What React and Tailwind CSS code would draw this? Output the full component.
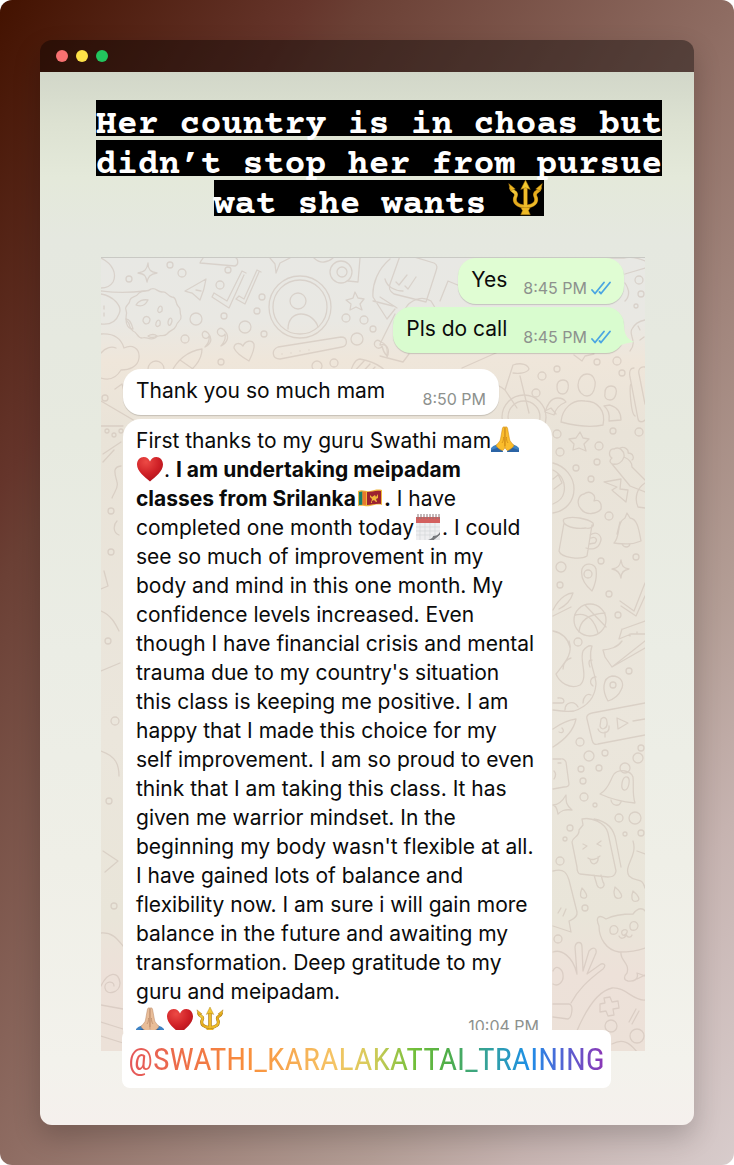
import React from "react";

function Trident({ className }) {
  return (
    <svg viewBox="0 0 30 30" className={className} role="img" aria-label="trident">
      <defs>
        <linearGradient id="gold" x1="0" y1="0" x2="1" y2="1">
          <stop offset="0" stopColor="#f8d84a" />
          <stop offset=".5" stopColor="#e3a91b" />
          <stop offset="1" stopColor="#f3c52f" />
        </linearGradient>
      </defs>
      <g fill="none" stroke="#9a6a0c" strokeLinecap="round">
        <path d="M15 6v18" strokeWidth="3.600" />
        <path d="M3 7c1 4 5 2 4 6-3 6 2 9 8 9s11-3 8-9c-1-4 3-2 4-6" strokeWidth="3.200" />
      </g>
      <path d="M3 7c1 4 5 2 4 6-3 6 2 9 8 9s11-3 8-9c-1-4 3-2 4-6" fill="none" stroke="url(#gold)" strokeWidth="2.400" strokeLinecap="round" />
      <path d="M13.700 6h2.600v20h-2.600z" fill="#efbd2b" />
      <path d="M15 0l4 8-4-1.500L11 8z" fill="#f5c92f" stroke="#9a6a0c" strokeWidth=".4" />
      <path d="M1 3l5.500 4.500L2.500 9z M29 3l-5.500 4.500L27.500 9z" fill="#edb722" stroke="#9a6a0c" strokeWidth=".4" />
      <path d="M11 23h8l-1.500 2.500L19 29h-8l1.500-3.500z" fill="#eeb925" stroke="#9a6a0c" strokeWidth=".4" />
    </svg>
  );
}

function Heart({ className }) {
  return (
    <svg viewBox="0 0 28 28" className={className} role="img" aria-label="red heart">
      <defs>
        <radialGradient id="heart" cx=".35" cy=".2" r=".9">
          <stop offset="0" stopColor="#ec4a45" />
          <stop offset=".55" stopColor="#cf2026" />
          <stop offset="1" stopColor="#a90f18" />
        </radialGradient>
      </defs>
      <path d="M14 26.500C9 22 1 16.500 1 9.500 1 5 4 2 7.700 2c3 0 5.300 1.800 6.300 4.500C15 3.800 17.300 2 20.300 2 24 2 27 5 27 9.500c0 7-8 12.500-13 17z" fill="url(#heart)" />
    </svg>
  );
}

function Hands({ className, light }) {
  const skin = light ? "#e9bd98" : "#fbbd2c";
  const shade = light ? "#b98664" : "#c9820f";
  return (
    <svg viewBox="0 0 28 28" className={className} role="img" aria-label="folded hands">
      <path d="M0 22c3-3 6-4 9-4l3 8H0zM28 22c-3-3-6-4-9-4l-3 8h12z" fill="#3f83c4" />
      <path d="M0 24l9-3 3 5H0zM28 24l-9-3-3 5h12z" fill="#2b64a5" />
      <path d="M13.800 1c-1.500-.6-2.300.4-2.500 2L9.500 13C9 15.500 7.500 16.500 5 19.500c1 2 4 4.500 6.500 5 2.500-1.500 2.500-3 2.500-6z" fill={skin} stroke={shade} strokeWidth=".5" />
      <path d="M14.200 1c1.500-.6 2.300.4 2.500 2l1.800 10c.5 2.500 2 3.500 4.500 6.500-1 2-4 4.500-6.500 5-2.500-1.500-2.500-3-2.500-6z" fill={skin} stroke={shade} strokeWidth=".5" />
      <path d="M14 2v18M11 17c1.500-2 1.500-4 1.500-6M17 17c-1.500-2-1.500-4-1.500-6" fill="none" stroke={shade} strokeWidth=".7" />
    </svg>
  );
}

function Flag({ className }) {
  return (
    <svg viewBox="0 0 28 20" className={className} role="img" aria-label="flag of Sri Lanka">
      <path d="M2 3c5-2 8 1 12 0s8-2 12-1v15c-4-1-8 0-12 1s-7-1-12 0z" fill="#f0b63c" />
      <path d="M3 4l3.500-.6v13.400l-3.500.3z" fill="#16806c" />
      <path d="M6.500 3.500l3.500.3v13.300l-3.500-.4z" fill="#e9792b" />
      <path d="M11 4c5 0 9-2 14-1v13c-5-.7-9 1-14 1z" fill="#9c2230" />
      <path d="M14 7l2 2 3-2 1 2 2-3v4l-2 1 1 3h-1l-2-2-2 1v2h-1l1-4-2-2z" fill="#f0b63c" />
    </svg>
  );
}

function Calendar({ className }) {
  return (
    <svg viewBox="0 0 26 28" className={className} role="img" aria-label="calendar">
      <path d="M1 4h24v16l-8 7H1z" fill="#eeeef0" />
      <path d="M1 4h24v6H1z" fill="#d3605f" />
      <path d="M3 1v5M6 1v5M9 1v5M12 1v5M15 1v5M18 1v5M21 1v5M24 1v5" stroke="#8a7476" strokeWidth="1" />
      <path d="M5 10v17M10 10v17M15 10v16M20 10v13M1 14h24M1 18h24M1 22h20" stroke="#d3d5d9" strokeWidth=".7" />
      <path d="M13 27c4-1 5-3 5-4 3 0 5-1 7-4v3l-6 5z" fill="#76787c" />
      <path d="M19 27l6-5v5z" fill="#e6e6e8" />
    </svg>
  );
}

function ReadTicks() {
  return (
    <svg viewBox="0 0 20 14" className="h-3.5 w-5 shrink-0" role="img" aria-label="Read" fill="none" stroke="#4ba6e2" strokeWidth="1.800" strokeLinecap="round" strokeLinejoin="round">
      <path d="M1 9l3 3.500L13 1.500M8.500 11l1.500 1.500L19 1.500" />
    </svg>
  );
}

const DOTS = [
  [170, 264, 3], [182, 272, 4], [129, 278, 3], [196, 318, 6], [245, 326, 6], [228, 269, 3], [220, 284, 4],
  [262, 296, 3], [257, 310, 3], [224, 315, 3], [264, 333, 3], [185, 338, 4], [346, 317, 4], [364, 319, 4],
  [357, 338, 6], [373, 328, 3], [156, 368, 8], [317, 365, 5], [334, 362, 4], [221, 361, 3], [105, 397, 3],
  [639, 279, 4], [641, 293, 3], [636, 305, 2], [542, 375, 4], [557, 368, 3], [536, 392, 4], [597, 361, 3],
  [617, 360, 4], [622, 372, 3], [639, 431, 4], [557, 433, 4], [599, 445, 4], [613, 430, 3], [560, 451, 4],
  [597, 461, 3], [576, 467, 3], [591, 478, 3], [609, 515, 4], [561, 566, 5], [601, 560, 3], [636, 556, 3],
  [560, 584, 3], [609, 593, 3], [618, 614, 3], [578, 641, 4], [629, 670, 3], [580, 741, 4], [589, 755, 5],
  [605, 752, 3], [638, 757, 5], [641, 747, 3], [581, 768, 3], [599, 767, 3], [583, 780, 3], [584, 796, 4],
  [595, 804, 2], [619, 817, 4], [635, 817, 6], [625, 833, 2], [641, 832, 3], [570, 827, 3], [565, 838, 2],
  [560, 860, 4], [585, 907, 3], [558, 938, 4], [107, 430, 2], [114, 434, 2], [121, 430, 2], [111, 510, 3],
  [111, 551, 3], [108, 640, 3], [115, 720, 4], [109, 800, 3], [114, 905, 3], [611, 1025, 6], [637, 1035, 7],
];

function Doodles() {
  return (
    <svg
      viewBox="101 257 544 794"
      preserveAspectRatio="xMaxYMin slice"
      className="absolute inset-0 h-full w-full opacity-45"
      aria-hidden="true"
      fill="none"
      stroke="#c6b7ad"
      strokeWidth="1.300"
      strokeLinecap="round"
      strokeLinejoin="round"
    >
      {DOTS.map(([x, y, r]) => (
        <circle key={`${x}-${y}`} cx={x} cy={y} r={r} />
      ))}
      <path d="M101 257c12 6 16 16 12 24-3 5-8 6-12 6M101 290c8 1 20 3 44 0M101 293c12 2 22 12 18 20-3 8-10 11-18 10M104 305v3M104 312v3M101 333c13-1 20 4 23 14 8-4 16 0 15 10-1 9-10 12-18 12-6 10-14 10-20 8M101 352c4-5 10-7 15-5" />
      <path d="M148 262c0 6 2 9 9 10-7 1-9 4-10 9-1-6-2-8-9-9 7-1 9-4 10-10z" />
      <path d="M151 288c5-2 6 3 11 3 5-1 5 4 10 5 5 0 3 6 6 9 4 3 1 6 3 10 1 5-4 5-5 10-2 5-5 3-9 8-4 4-8-1-12 4-6 3-8-2-13 0-5 0-4-5-9-7-5-3-2-7-6-10-3-4 1-6-1-11-2-5 4-5 4-10 1-4 6-2 9-7 4-4 8 0 12-4z" />
      <path d="M136 304c2-4 7-6 12-5-3 6-7 7-12 5zM158 308c2-5 5-3 4 2-3 3-5 1-4-2zM143 320c0-5 5-6 7-2 0 5-5 7-7 2zM156 322c2-5 5-3 4 2-3 3-5 1-4-2zM126 318c4 0 6 6 7 10-5 0-7-5-7-10zM148 335c3-2 7-2 9 0-3 2-7 2-9 0zM168 321c1-5 4-5 4-1-1 5-4 6-4 1z" />
      <path d="M185 290l21-12c-1 7-3 14-6 21l-8-7zM192 292l8 7M196 289l5 1" />
      <path d="M212 296l17 11 15-33M214 292l13 8 15-30 4 2M236 298l9 5 14-32M239 295l5 3 13-29 4 2M212 296l2-4M236 298l3-3" />
      <circle cx="300" cy="306" r="31" />
      <circle cx="300" cy="306" r="27" />
      <circle cx="298" cy="300" r="8" />
      <path d="M288 328c0-10 6-15 13-15 8 0 15 6 17 13M355 291l3 6 6 1-4 5 2 6-6-3-6 3 1-6-5-4 7-2z" />
      <path d="M208 332c-4-4-7 0-5 4 2 2 5 2 6-1 1 5-1 8-4 11 6-3 8-8 3-14zM224 329c-4-4-8 0-6 4 2 3 6 3 7 0 1 5-1 8-4 12 7-4 9-10 3-16zM381 341c-4-4-8 0-6 4 2 3 6 3 7 0 1 5 3 8 5 10 1-7 0-12-6-14z" />
      <path d="M249 360c-7-4-13-8-15-13 0-5 6-6 9-2 2-5 9-7 11-2 1 5-2 11-5 17z" />
      <path d="M278 346l63-10c7 0 7 9 1 10l-62 12c-8 0-9-9-2-12zM282 353v0M291 352v0M300 350v0M309 349v0M200 262l35 3c4-1 3-7 1-8M200 262c1-3 3-4 3-5" />
      <path d="M172 370c5-10 15-20 30-22 0 12-10 22-20 27M180 359l13 9M101 400l34 20h18M115 388l7-5 2 7M348 380c3-12 6-22 12-22 15 3 28 10 30 22M350 375l14-15M356 378l14-15M362 380l13-14" />
      <circle cx="341" cy="271" r="11" />
      <circle cx="342" cy="271" r="5" />
      <path d="M314 257c6 6 14 5 20-1M348 280l10 1 2-24M270 257l5 6 1 9 4-10 10-5M390 258c-12 10-18 25-17 38l14 22M387 318l8-10M373 300l20 5M385 278c2 8 10 12 18 12" />
      <path d="M401 252l33 10c4 2 3 5 2 8l-10 31-32-8c-5-3-5-6-4-10zM396 281l3 3 8-10M405 285l3 3 8-12M380 296l17 11M405 308c5-9 17-14 26-8l11 18M380 355l23 6 6-8M395 313l-15 30M440 300l8-20 12 5M380 344c8-2 10 6 7 12" />
      <path d="M462 367l45-20M480 377c7 3 16 5 25 12l8-25c9-3 15 0 16 4-2 4-10 5-16 4M505 389l12 18M520 375l9 37" />
      <circle cx="524" cy="416" r="22" />
      <circle cx="524" cy="416" r="16" />
      <path d="M587 373c6 0 9 6 8 12-1 6-4 10-8 10s-9-4-9-11c0-6 4-11 9-11zM563 379c5 0 6 4 5 9-1 3-3 5-5 5-4 0-6-3-6-7s2-7 6-7zM611 385c5 0 6 4 5 8-1 4-3 6-6 6-4 0-6-3-5-7 0-4 2-7 6-7zM561 421c1-13 11-23 24-21 13 0 21 10 18 24-13 3-27 1-42-3zM558 397c-8 0-11 8-13 14l9 3c2-8 7-11 12-13-2-3-5-4-8-4zM610 404c7 2 11 7 11 15l-12 1c1-7-1-12-5-15z" />
      <path d="M634 367c-4 0-5 4-4 9l8 42c1 4 5 3 7 1M645 366c-5-1-7 3-6 7l6 30M635 415c-4-1-6-30-4-32M604 257h20c8-2 14 0 21 3M625 273l20-6M625 300c5-5 4-12 0-18M630 350c8-10-2-16 2-22 3-6 8-8 13-9M638 325l2 4M640 339l4-3M574 354l8 6 3-5 9-2M545 410l6-3 5 6M508 302l6-4" />
      <path d="M580 431l3 6 6 1-5 5 2 7-7-3-6 2 1-6-5-5 7-1zM614 448c5-3 11 2 10 8 5 2 8 5 8 10l13 13M624 456c-2 6-7 8-12 7l18 22 15 6M614 448c-5-1-6 7-2 9-4 3-1 7 3 6M620 447c5-2 9 2 8 5 6 0 6 6 4 7" />
      <path d="M604 481l17-3-1 10 8 1-2 12-12-10-2-2 5-3z" />
      <path d="M584 493c5-4 13 0 10 7 5-2 8 2 7 8-4 5-15 7-20 0-5-5-3-14 3-15zM553 462c12 3 21 14 21 26s-8 22-21 24M553 469c8 4 13 12 11 22-1 6-6 10-11 12M554 488l8-6-4-9M553 478l5-4M645 482c-8 5-11 15-7 24l7 1" />
      <path d="M564 518c8-4 24 0 29 4 2 4-4 6-7 5-8 1-18 0-22-5-1-2-1-3 0-4zM564 522l-5 28c2 7 22 9 28 5l5-31M590 534c8-5 13 2 10 8-2 6-9 7-14 5M591 537c5-2 7 2 4 5l-6 1" />
      <path d="M614 542c7-7 2-20 11-25l2-5 3 5c8 1 9 13 11 23-9 4-18 3-27 2zM622 543c2 4 7 4 8 0M620 521l-3 12M621 559c1 6 2 8 8 9-6 1-8 4-8 9-1-5-3-8-9-9 6-1 8-3 9-9z" />
      <path d="M592 590c-7-6-12-13-10-22 3-7 12-6 14 0 1 7-1 16-4 22zM553 609c7-14 16-17 20-17-2 7-8 13-14 16M553 615l18-9M620 600l14 10 11-28M621 605l15 10 9-20M622 628l-3 10 12-5h14M623 628l22-8M630 633v2M637 631v2" />
      <circle cx="588" cy="573" r="4" />
      <circle cx="590" cy="619" r="16" />
      <path d="M575 614c12-3 19 4 23 18M579 631c1-12 9-18 26-19M585 604l21 22M553 630c10 2 15 8 17 16" />
      <path d="M569 640c4 12-2 19-13 33 3 8 14 16 24 11 9-8-1-25 3-34 3-4 6-6 9-5-5 14 4 28 4 38-1 14-10 23-22 27-7 1-14 0-21-1M553 702h9c3 0 3-6-4-5M563 668c0-6 4-10 8-11M592 659c-3-1-4 3-2 7M596 676c-6 0-7 6-3 9M583 702c0-6 4-10 8-8M565 709c0-8 9-10 13-3" />
      <path d="M603 649c7-1 14-2 19-9M603 649l2 7 7 10 33-19M612 666l33-26" />
      <path d="M608 700c-6-10-6-23 4-25 9 0 13 7 9 14-2 5-7 9-13 11z" />
      <circle cx="613" cy="684" r="3" />
      <path d="M645 702l-53 10c-4 1-6 3-5 6l5 21c1 4 3 5 6 4l47-9M601 718c3-3 6-1 6 3 1 7-6 9-7 4zM598 728c2 6 12 5 11-3M605 731v5M617 717l11 5-10 6zM633 720l12-2M576 718c-8 1-16 5-23 10M576 718c-2 10-10 20-23 28M559 731c5 2 5-2 3-4M553 758h8c3-1 4 1 5 3l3 22c0 3-3 3-5 3l-11 2M554 770c2 2 2 5 0 8M558 762h3M566 794c0 7 0 10 6 15-8-1-11 1-14 4-1-4-1-8-5-9 5 0 9-3 13-10z" />
      <path d="M600 793c9-5 10-14 14-20 6-6 17-3 19 3 1 9-1 17 2 26-12-1-24-4-35-9zM611 799c1 6 8 7 10 2M627 776c-5-2-7 12-3 13 5 1 7-12 3-13z" />
      <circle cx="625" cy="767" r="5" />
      <path d="M582 818c9-2 23 3 26 14l8 38c-1 6-5 6-8 6l-28-3c-3-1-3-4-3-7l-5-25c0-5 8-5 7-12l4-5zM594 818c12 2 20 9 22 22l5 26M583 843l4 2-4 3M601 840l-4 3 4 2M588 857c3 3 10 1 12-2M590 858c1 8 9 5 8-2M594 874l3 10c2 6 10 2 6-3l-2-7M633 840c5 15-10 25-4 35 7 7 13 0 16 12M637 850l8 3" />
      <path d="M582 887c3 3 7 9 3 10-6 1-5-5-3-10zM615 886c5 4 9 10 5 11-6 2-7-5-5-11zM633 890c5 4 8 9 4 10-6 2-6-5-4-10zM553 870c12-3 14 3 16 9l8 32c1 6-6 8-8 9l2 11-18-6M558 912l3-5M563 915l3-7" />
      <path d="M599 925c-4-9 0-12 7-7 8-4 18-5 27-5 6-8 11-5 12-3M599 925c0 12 7 24 20 26 9 0 18-1 26-4M610 930c-1-7 8-7 8-1-1 6-8 5-8 1zM630 926c-1-7 8-7 8-1-1 6-8 5-8 1zM622 930c4-3 7 0 4 3s-5 0-4-3zM619 935c2 4 7 2 7-2 1 4 5 4 6 1M621 952c-1 7 9 10 6 20-3 3-4 7 1 8 6 1 11-2 9-8M637 972l8 3M637 978l8-4" />
      <path d="M553 951c8-3 20 4 24 22l-2-27c1-6 7-6 7 0l1 24 6-20c4-5 8-3 7 2l-9 21 14-10c4-1 5 2 2 5-16 12-25 21-32 34M553 970c3-8 10-1 10 4 1 7-5 12-10 9M553 1003h16c5 0 3 14-1 15l-15-2M576 1032c10-24 22-42 36-45 14-1 21 13 33 12M600 1003l5-1-1-5 6-1 2 5 6-1 1 7-6 1 1 6-6 1-2-5-6 1zM629 1021l7-13M632 1023l7-13M612 1043c11-6 18-1 25 8" />
      <path d="M101 425h22M103 453l18-12M103 461l11-12M121 465c-9 1-6 8-4 16 2 6-3 10-5 16M104 570l4 15-7 3M117 520c-4 4-4 12 2 14M101 610c10 4 14 12 18 20M101 670l19-8M101 750c15 5 18 14 18 25M103 850l15 10-13 11M101 932c12-1 17 7 22 13M101 985c7-15 18-15 19-3 0 10-14 13-15 5-1-7 9-8 9-2M101 1004l22 4M101 1021l22 7M101 1035l22 7" />
    </svg>
  );
}

function Time({ children, read, className = "" }) {
  return (
    <span className={`mb-1 flex shrink-0 items-center gap-1 self-end text-base leading-6 text-[#8d918d] ${className}`}>
      {children}
      {read && <ReadTicks />}
    </span>
  );
}

function Sent({ children, time, tail, className }) {
  return (
    <div className={`relative flex h-[46px] gap-4 self-end rounded-[18px] px-[13px] shadow-[0_1px_1px_rgba(0,0,0,0.16)] ${className}`}>
      {tail && (
        <svg viewBox="0 0 20 22" className="absolute -right-2.5 bottom-1.5 h-[22px] w-5" aria-hidden="true">
          <path d="M10 0c0 9 3 14 10 17-7 1-12 2-16 5z" fill="#d9fccf" />
        </svg>
      )}
      <p className="text-[21px] leading-[44px]">{children}</p>
      <Time read>{time}</Time>
    </div>
  );
}

const emoji = "inline-block h-7 w-7 align-[-6px]";

export default function App() {
  return (
    <main className="rounded-xl bg-[linear-gradient(to_bottom_right,#431200_0%,#65352b_21%,#6b4035_25%,#8e6c62_50%,#b39d95_75%,#c6b3b0_85%,#d8cccc_100%)] p-10 font-['Inter',sans-serif]">
      <article className="overflow-hidden rounded-xl shadow-[0_12px_28px_rgba(0,0,0,0.2)]">
        <header className="flex h-8 items-center gap-2 bg-black/40 px-4">
          <span className="size-3 rounded-full bg-[#f87171]" />
          <span className="size-3 rounded-full bg-[#fde047]" />
          <span className="size-3 rounded-full bg-[#22c55e]" />
        </header>

        <section className="bg-[linear-gradient(to_bottom,#d2d7c9_0%,#dde2d2_5%,#e4e9da_10%,#e5e8e0_16%,#e7eae0_35%,#ebede5_55%,#efefe7_75%,#f3f2ec_94%,#f5f0ed_100%)] pt-7 pb-[37px]">
          <h1 className="flex flex-col items-center gap-1 pl-6 font-['Courier_Prime','FreeMono','Liberation_Mono',monospace] text-[35px] font-bold leading-[52px] whitespace-nowrap text-white">
            <span className="h-9 bg-black">Her country is in choas but</span>
            <span className="h-9 bg-black">didn’t stop her from pursue</span>
            <span className="flex h-9 bg-black">
              wat she wants&nbsp;
              <Trident className="h-9 w-[37px]" />
            </span>
          </h1>

          <div className="pr-[49px] pl-[61px] text-[#0b0b0b]">
            <div className="relative mt-[41px] border-t border-[#c9c9c4] bg-[linear-gradient(to_bottom,#e8e8e4_0%,#e9e8e3_8%,#efe6da_13%,#e9e3d8_22%,#ebe6dc_60%,#e9e5d9_83%,#ede1d9_90%,#ece1d8_100%)]">
              <Doodles />
              <div className="relative flex flex-col items-start pr-[21px] pb-1 pl-[22px]">
                <Sent time="8:45 PM" className="bg-[#e0fdd3]">Yes</Sent>
                <Sent time="8:45 PM" tail className="mt-[3px] bg-[#d9fccf]">Pls do call</Sent>

                <div className="mt-4 flex h-[46px] w-[376px] max-w-full justify-between rounded-[18px] bg-white px-[13px] shadow-[0_1px_1px_rgba(0,0,0,0.16)]">
                  <p className="text-[21px] leading-[44px]">Thank you so much mam</p>
                  <Time>8:50 PM</Time>
                </div>

                <div className="mt-1 w-[429px] max-w-full rounded-[18px] bg-white px-[13px] pt-[7px] pb-3">
                  <p className="text-[21px] leading-[29px] whitespace-nowrap">
                    First thanks to my guru Swathi mam<Hands className={emoji} /><br />
                    <Heart className={emoji} />. <strong className="font-bold">I am undertaking meipadam<br />
                    classes from Srilanka<Flag className="inline-block h-5 w-7 align-[-2px]" />.</strong> I have<br />
                    completed one month today<Calendar className={emoji} />. I could<br />
                    see so much of improvement in my<br />
                    body and mind in this one month. My<br />
                    confidence levels increased. Even<br />
                    though I have financial crisis and mental<br />
                    trauma due to my country's situation<br />
                    this class is keeping me positive. I am<br />
                    happy that I made this choice for my<br />
                    self improvement. I am so proud to even<br />
                    think that I am taking this class. It has<br />
                    given me warrior mindset. In the<br />
                    beginning my body wasn't flexible at all.<br />
                    I have gained lots of balance and<br />
                    flexibility now. I am sure i will gain more<br />
                    balance in the future and awaiting my<br />
                    transformation. Deep gratitude to my<br />
                    guru and meipadam.
                  </p>
                  <div className="flex h-[29px] items-center gap-0.5">
                    <Hands light className="size-7" />
                    <Heart className="size-7" />
                    <Trident className="size-7" />
                    <span className="ml-auto pt-2.5 text-base leading-6 text-[#8d918d]">10:04 PM</span>
                  </div>
                </div>
              </div>
            </div>

            <a
              href="#swathi_karalakattai_training"
              className="relative -mt-[21px] ml-[21px] flex h-[58px] w-[489px] max-w-full items-center justify-center rounded-lg bg-white font-['Roboto_Condensed','Liberation_Sans_Narrow','DejaVu_Sans_Condensed',sans-serif] text-[32px] leading-[58px]"
            >
              <span className="bg-[linear-gradient(to_right,#e4565a_0%,#ee7048_12%,#f98f3c_25%,#f5c465_43%,#d6cc5a_51%,#72bf3a_60%,#4fae48_67%,#2f9faa_77%,#1d8fe8_84%,#4a6ad8_90%,#8d35b5_100%)] bg-clip-text text-transparent">
                @SWATHI_KARALAKATTAI_TRAINING
              </span>
            </a>
          </div>
        </section>
      </article>
    </main>
  );
}
